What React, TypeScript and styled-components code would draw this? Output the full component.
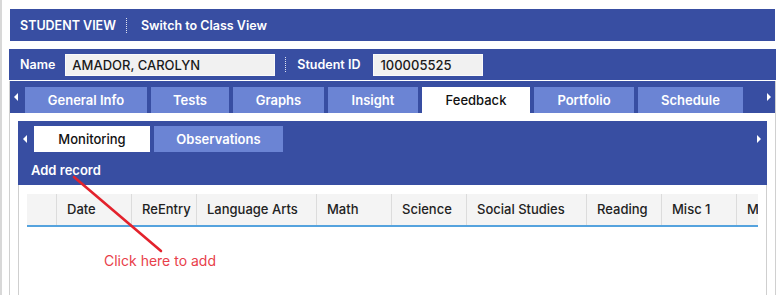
import { FC } from "react";
import styled, { createGlobalStyle } from "styled-components";

const BLUE = "#384ea2";
const TAB = "#6b84d4";

const GlobalStyle = createGlobalStyle`
  html, body { margin: 0; padding: 0; background: #fff; }
  body { font-family: Inter, "Open Sans", sans-serif; font-size: 13px; }
  * { box-sizing: border-box; }
`;

const Page = styled.div`
  position: relative;
  height: 100vh;
  min-height: 295px;
  overflow: hidden;
  border-left: 2px solid #d8d8d8;
  padding: 9px 0 0 8px;
  display: flex;
  flex-direction: column;
`;

const TopBar = styled.div`
  flex: 0 0 32px;
  width: 765px;
  background: ${BLUE};
  display: flex;
  align-items: center;
  padding-left: 10px;
  color: #fff;
  font-weight: 600;
  font-size: 12.5px;
`;

const Sep = styled.span<{ $gapLeft: number; $gapRight: number }>`
  width: 0;
  height: 15px;
  border-left: 1px dotted rgba(255, 255, 255, 0.85);
  margin: 0 ${(p) => p.$gapRight}px 0 ${(p) => p.$gapLeft}px;
`;

const Panel = styled.div`
  flex: 1 0 auto;
  margin: 8px 0 0 -1px;
  width: 767px;
  border-left: 1px solid #d0d0d0;
  border-right: 1px solid #d0d0d0;
  display: flex;
  flex-direction: column;
`;

const NameRow = styled.div`
  height: 31px;
  margin: 0 -1px;
  background: ${BLUE};
  display: flex;
  align-items: center;
  padding-left: 11px;
  border-bottom: 1px solid #fff;
  box-sizing: content-box;
`;

const Label = styled.span<{ $ml?: number }>`
  color: #fff;
  font-weight: 600;
  font-size: 12.5px;
  margin-left: ${(p) => p.$ml ?? 0}px;
`;

const Field = styled.div<{ $width: number; $ml?: number }>`
  width: ${(p) => p.$width}px;
  height: 22px;
  margin-left: ${(p) => p.$ml ?? 10}px;
  background: #f1f1f1;
  border: 1px solid #fafafa;
  color: #1a1a1a;
  font-weight: 500;
  font-size: 13px;
  line-height: 20px;
  padding-left: 6px;
`;

const TabRow = styled.div<{ $height: number; $lead: number }>`
  flex: 0 0 ${(p) => p.$height}px;
  height: ${(p) => p.$height}px;
  background: ${BLUE};
  display: flex;
  align-items: flex-end;
  padding-left: ${(p) => p.$lead}px;
  position: relative;
`;

const Tabs = styled.div`
  display: flex;
  gap: 4px;
`;

const Tab = styled.div<{ $width: number; $active?: boolean }>`
  width: ${(p) => p.$width}px;
  height: 26px;
  background: ${(p) => (p.$active ? "#fff" : TAB)};
  color: ${(p) => (p.$active ? "#111" : "#fff")};
  font-weight: ${(p) => (p.$active ? 500 : 600)};
  font-size: 13px;
  display: flex;
  align-items: center;
  justify-content: center;
`;

const Caret = styled.span<{ $dir: "left" | "right"; $x: number; $y: number }>`
  position: absolute;
  left: ${(p) => p.$x}px;
  top: ${(p) => p.$y}px;
  width: 0;
  height: 0;
  border-top: 4px solid transparent;
  border-bottom: 4px solid transparent;
  ${(p) =>
    p.$dir === "left"
      ? "border-right: 4px solid #fff;"
      : "border-left: 4px solid #fff;"}
`;

const Inner = styled.div`
  flex: 1 0 auto;
  margin: 8px 8px 0 8px;
  border-left: 1px solid #cfcfcf;
  border-right: 1px solid #cfcfcf;
`;

const InnerHead = styled.div`
  margin: 0 -1px;
  background: ${BLUE};
`;

const AddRow = styled.div`
  height: 33px;
  display: flex;
  align-items: center;
  padding: 2px 0 0 13px;
  color: #fff;
  font-weight: 600;
  font-size: 13px;
`;

const TableWrap = styled.div`
  padding: 9px 8px 0 8px;
  overflow: hidden;
`;

const HeaderRow = styled.div`
  display: flex;
  width: 100%;
  overflow: hidden;
  background: #f4f4f4;
  border-bottom: 2px solid #55a3de;
`;

const HeadCell = styled.div<{ $width: number }>`
  flex: 0 0 ${(p) => p.$width}px;
  height: 31px;
  line-height: 31px;
  padding-left: 10px;
  border-right: 1px solid #dcdcdc;
  color: #222;
  font-weight: 500;
  font-size: 13px;
  white-space: nowrap;
`;

const Hint = styled.div`
  position: absolute;
  left: 102px;
  top: 252px;
  color: #e8404a;
  font-size: 14px;
  white-space: nowrap;
`;

const Pointer = styled.svg`
  position: absolute;
  left: 0;
  top: 0;
  pointer-events: none;
`;

const mainTabs = [
  { label: "General Info", w: 122 },
  { label: "Tests", w: 78 },
  { label: "Graphs", w: 91 },
  { label: "Insight", w: 90 },
  { label: "Feedback", w: 108, active: true },
  { label: "Portfolio", w: 100 },
  { label: "Schedule", w: 105 },
];

const columns = [
  { label: "", w: 30 },
  { label: "Date", w: 75 },
  { label: "ReEntry", w: 65 },
  { label: "Language Arts", w: 120 },
  { label: "Math", w: 75 },
  { label: "Science", w: 75 },
  { label: "Social Studies", w: 120 },
  { label: "Reading", w: 75 },
  { label: "Misc 1", w: 75 },
  { label: "Misc 2", w: 75 },
];

const App: FC = () => (
  <>
    <GlobalStyle />
    <Page>
      <TopBar>
        STUDENT VIEW
        <Sep $gapLeft={10} $gapRight={14} />
        Switch to Class View
      </TopBar>

      <Panel>
        <NameRow>
          <Label>Name</Label>
          <Field $width={210}>AMADOR, CAROLYN</Field>
          <Sep $gapLeft={10} $gapRight={0} />
          <Label $ml={11}>Student ID</Label>
          <Field $width={110} $ml={13}>
            100005525
          </Field>
        </NameRow>
        <TabRow $height={32} $lead={15}>
          <Caret $dir="left" $x={4} $y={12} />
          <Tabs>
            {mainTabs.map((t) => (
              <Tab key={t.label} $width={t.w} $active={t.active}>
                {t.label}
              </Tab>
            ))}
          </Tabs>
          <Caret $dir="right" $x={757} $y={12} />
        </TabRow>

        <Inner>
          <InnerHead>
            <TabRow $height={31} $lead={16}>
              <Caret $dir="left" $x={5} $y={14} />
              <Tabs>
                <Tab $width={116} $active>
                  Monitoring
                </Tab>
                <Tab $width={129}>Observations</Tab>
              </Tabs>
              <Caret $dir="right" $x={739} $y={14} />
            </TabRow>
            <AddRow>Add record</AddRow>
          </InnerHead>
          <TableWrap>
            <HeaderRow>
              {columns.map((c, i) => (
                <HeadCell key={i} $width={c.w}>
                  {c.label}
                </HeadCell>
              ))}
            </HeaderRow>
          </TableWrap>
        </Inner>
      </Panel>

      <Pointer width="784" height="295" viewBox="0 0 784 295">
        <line
          x1="72"
          y1="177"
          x2="159"
          y2="251"
          stroke="#e3222c"
          strokeWidth="2.6"
          strokeLinecap="round"
        />
      </Pointer>
      <Hint>Click here to add</Hint>
    </Page>
  </>
);

export default App;
